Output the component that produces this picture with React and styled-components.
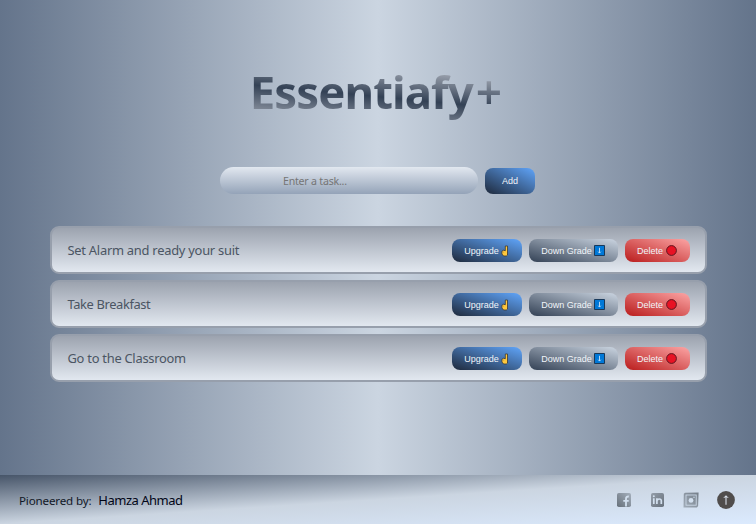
import React from "react";
import styled, { createGlobalStyle, css } from "styled-components";

const GlobalStyle = createGlobalStyle`
  * { box-sizing: border-box; }
  body { margin: 0; font-family: "Noto Sans", "Open Sans", sans-serif; }
`;

const Page = styled.div`
  display: flex;
  flex-direction: column;
  height: 524px;
  overflow: hidden;
  background: linear-gradient(to right, #64748b, #cbd5e1, #64748b);
`;

const Main = styled.main`
  flex: 1;
  padding: 62px 49px 0 50px;
`;

const Title = styled.h1`
  display: flex;
  justify-content: center;
  margin: 0;
  height: 62px;
  padding-right: 6px;
  font-size: 45.5px;
  line-height: 59px;
  font-weight: 700;
  letter-spacing: -0.9px;
  color: transparent;
  background: linear-gradient(to bottom left, #9ca3af 29%, #334155 53%, #9ca3af 80%);
  background-clip: text;
  -webkit-background-clip: text;
`;

const Plus = styled.span`
  margin-left: 3px;
  font-weight: 600;
  font-size: 46px;
`;

const Form = styled.form`
  display: flex;
  align-items: center;
  gap: 7px;
  margin: 43px 0 32px 170px;
`;

const TaskInput = styled.input`
  width: 258px;
  height: 27px;
  padding: 1px 63px 0;
  border: 0;
  border-radius: 14px;
  outline: 0;
  font: 10.6px "Noto Sans", sans-serif;
  letter-spacing: -0.22px;
  background: linear-gradient(#e2e8f0, #94a3b8);
  &::placeholder { color: #757575; opacity: 1; }
`;

const tones = {
  blue: css`background: linear-gradient(to top right, #1e293b, #60a5fa);`,
  slate: css`background: linear-gradient(to top right, #334155, #cbd5e1);`,
  red: css`background: linear-gradient(to top right, #b91c1c, #fca5a5);`,
};

const Button = styled.button`
  display: flex;
  align-items: center;
  justify-content: center;
  gap: ${(p) => p.$gap || 2}px;
  width: ${(p) => p.$width}px;
  height: ${(p) => p.$height || 23}px;
  padding: ${(p) => (p.$height ? 0 : "1px 0 0")};
  border: 0;
  border-radius: 8px;
  color: #f1f5f9;
  font: 9px/12px "Liberation Sans", Arial, sans-serif;
  white-space: nowrap;
  ${(p) => tones[p.$tone]}
`;

const List = styled.ul`
  display: grid;
  gap: 6px;
  margin: 0;
  padding: 0;
  list-style: none;
`;

const Item = styled.li`
  display: flex;
  align-items: center;
  justify-content: space-between;
  height: 48px;
  padding: 0 15.5px 0 15.5px;
  border: 2px solid #979fac;
  border-radius: 9px;
  color: #4b5563;
  background: linear-gradient(#9ca3af, #e2e8f0);
`;

const TaskName = styled.span`
  font-size: 12.9px;
  letter-spacing: ${(p) => p.$spacing}px;
`;

const Actions = styled.div`
  display: flex;
  gap: 7px;
`;

const Footer = styled.footer`
  display: flex;
  align-items: center;
  justify-content: space-between;
  height: 49px;
  padding: 1px 21px 0 19px;
  background: linear-gradient(to bottom right, #475569, #cbd5e1, #dbeafe);
`;

const Credit = styled.div`
  display: flex;
  align-items: baseline;
  gap: 7px;
  color: #111827;
  font-size: 11.6px;
  letter-spacing: -0.16px;
`;

const Author = styled.span`
  font-size: 13px;
  letter-spacing: -0.5px;
  color: #020617;
`;

const Links = styled.nav`
  display: flex;
  align-items: center;
  svg { display: block; }
`;

const IconLink = styled.a`
  margin-left: ${(p) => p.$gap || 0}px;
`;

const Hand = () => (
  <svg width="8" height="12" viewBox="0 0 8 12">
    <path d="M4.3 1h2.2v9L5.4 11H2.6L.9 9V6.2l1.8-1 1.6.6z" fill="#ffc83d" stroke="#3b3833" strokeWidth=".8" />
    <path d="M2.6 6.4v1.6" stroke="#c99223" strokeWidth=".5" />
  </svg>
);

const DownArrow = () => (
  <svg width="11" height="11" viewBox="0 0 11 11">
    <path d="M.5.5h10v10H.5z" fill="#0078d7" stroke="#18395b" />
    <path d="M5.5 2.8v5M4.2 6.7l1.3 1.4 1.3-1.4" fill="none" stroke="#e0efff" strokeWidth=".8" />
  </svg>
);

const RedDot = () => (
  <svg width="11" height="11" viewBox="0 0 11 11">
    <circle cx="5.5" cy="5.5" r="4.9" fill="#e81224" stroke="#5f1720" />
  </svg>
);

const Facebook = () => (
  <svg width="14" height="14" viewBox="0 0 14 14">
    <defs>
      <linearGradient id="facebook" x1="0" y1="1" x2="1" y2="0">
        <stop stopColor="#67707a" /><stop offset="1" stopColor="#a5b0bd" />
      </linearGradient>
    </defs>
    <rect width="14" height="14" rx="1.8" fill="url(#facebook)" />
    <path d="M9 13.5V6c0-2 .8-2.6 2.8-2.5M6.3 7.8h5.4" fill="none" stroke="#d3e0ef" strokeWidth="1.8" />
  </svg>
);

const LinkedIn = () => (
  <svg width="13" height="14" viewBox="0 0 13 14">
    <defs>
      <linearGradient id="linkedin" x1="0" y1="0" x2="1" y2="1">
        <stop stopColor="#949eaa" /><stop offset="1" stopColor="#68717c" />
      </linearGradient>
    </defs>
    <rect width="13" height="14" rx="1.8" fill="url(#linkedin)" />
    <path d="M2.8 5.3V11M5.9 5.3V11M6.2 7.8c0-2.3 4.1-2.5 4.1 0V11" fill="none" stroke="#d3e0ef" strokeWidth="1.7" />
    <circle cx="2.8" cy="3.2" r="1" fill="#d3e0ef" />
  </svg>
);

const Instagram = () => (
  <svg width="16" height="16" viewBox="0 0 16 16">
    <defs>
      <linearGradient id="instagram" x1="0" y1="1" x2="1" y2="0">
        <stop stopColor="#a1acb9" /><stop offset="1" stopColor="#747e89" />
      </linearGradient>
    </defs>
    <path d="M2 .8 15.6.4l-.5 13.5-1.2 1.5H.5l.3-13.6z" fill="url(#instagram)" />
    <rect x="3" y="3" width="10.2" height="10.2" fill="none" stroke="#cbd8e7" strokeWidth=".9" />
    <circle cx="8" cy="8.4" r="2.4" fill="#d3e0ef" />
    <circle cx="11" cy="5.2" r=".7" fill="#d3e0ef" />
  </svg>
);

const TopArrow = () => (
  <svg width="18" height="18" viewBox="0 0 18 18">
    <circle cx="9" cy="9" r="8.9" fill="#504d4c" />
    <path d="M9 13.8V5.5" stroke="#d8dfe9" strokeWidth="1.1" />
    <path d="M6.2 7.1 9 4.3l2.8 2.8L9 6.3z" fill="#d8dfe9" />
  </svg>
);

const tasks = [
  { name: "Set Alarm and ready your suit", spacing: -0.25 },
  { name: "Take Breakfast", spacing: -0.38 },
  { name: "Go to the Classroom", spacing: -0.26 },
];

export default function App() {
  return (
    <Page>
      <GlobalStyle />
      <Main>
        <Title>Essentiafy<Plus>+</Plus></Title>
        <Form onSubmit={(e) => e.preventDefault()}>
          <TaskInput placeholder="Enter a task..." />
          <Button $tone="blue" $width={50} $height={26}>Add</Button>
        </Form>
        <List>
          {tasks.map((task) => (
            <Item key={task.name}>
              <TaskName $spacing={task.spacing}>{task.name}</TaskName>
              <Actions>
                <Button $tone="blue" $width={70}>Upgrade <Hand /></Button>
                <Button $tone="slate" $width={89}>Down Grade <DownArrow /></Button>
                <Button $tone="red" $width={65} $gap={3}>Delete <RedDot /></Button>
              </Actions>
            </Item>
          ))}
        </List>
      </Main>
      <Footer>
        <Credit>Pioneered by: <Author>Hamza Ahmad</Author></Credit>
        <Links>
          <IconLink><Facebook /></IconLink>
          <IconLink $gap={20}><LinkedIn /></IconLink>
          <IconLink $gap={19}><Instagram /></IconLink>
          <IconLink $gap={18}><TopArrow /></IconLink>
        </Links>
      </Footer>
    </Page>
  );
}
